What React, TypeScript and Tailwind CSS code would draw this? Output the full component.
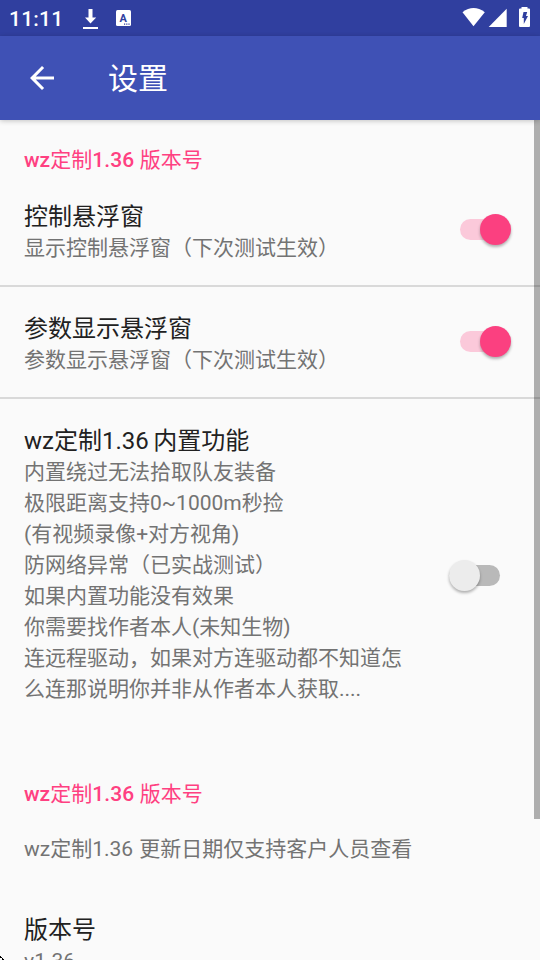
import React from "react";

interface PreferenceItem {
  title: string;
  lines: string[];
  checked: boolean;
}

const PREFERENCES: PreferenceItem[] = [
  {
    title: "控制悬浮窗",
    lines: ["显示控制悬浮窗（下次测试生效）"],
    checked: true,
  },
  {
    title: "参数显示悬浮窗",
    lines: ["参数显示悬浮窗（下次测试生效）"],
    checked: true,
  },
  {
    title: "wz定制1.36 内置功能",
    lines: [
      "内置绕过无法拾取队友装备",
      "极限距离支持0~1000m秒捡",
      "(有视频录像+对方视角)",
      "防网络异常（已实战测试）",
      "如果内置功能没有效果",
      "你需要找作者本人(未知生物)",
      "连远程驱动，如果对方连驱动都不知道怎",
      "么连那说明你并非从作者本人获取....",
    ],
    checked: false,
  },
];

export default function App() {
  return (
    <div className="relative flex h-[960px] w-[540px] flex-col overflow-hidden bg-[#fafafa] font-[Roboto,'Noto_Sans_CJK_SC',sans-serif] text-[#212121]">
      <StatusBar />
      <Toolbar title="设置" />

      <main className="flex-1 overflow-hidden">
        <CategoryTitle />
        {PREFERENCES.map((item, i) => (
          <SwitchPreference
            key={item.title}
            item={item}
            divider={i < PREFERENCES.length - 1}
          />
        ))}

        <div className="mt-0.5">
          <CategoryTitle />
        </div>
        <p className="mt-[25px] h-[31px] px-6 text-[21px] leading-[31px] text-[#737373] [word-spacing:0.8px]">
          wz定制1.36 更新日期仅支持客户人员查看
        </p>
        <div className="mt-12 px-6">
          <h2 className="h-[33px] text-2xl leading-[35px]">版本号</h2>
          <p className="text-[21px] leading-[31px] text-[#737373]">v1.36</p>
        </div>
      </main>

      {/* Scrollbar */}
      <div className="absolute right-0 top-[120px] h-[699px] w-1.5 bg-black/30" />

      {/* Pointer edge */}
      <svg
        className="absolute bottom-0 left-0"
        width="5"
        height="4"
        viewBox="0 0 5 4"
        shapeRendering="crispEdges"
      >
        <path d="M0 0h1v2H0zM1 1h1v1H1zM2 2h1v1H2zM2 3h2v1H2z" fill="#000" />
      </svg>
    </div>
  );
}

// ============================================================
// Sub-components
// ============================================================

function StatusBar() {
  return (
    <div className="flex h-9 shrink-0 items-center bg-[#303f9f] text-white">
      <span className="ml-[9px] w-[72px] pt-px text-[21px] font-medium leading-9 tracking-[0.2px]">
        11:11
      </span>
      <svg className="ml-0.5" width="16" height="36" viewBox="0 0 16 36" fill="#fff">
        <path d="M5.500 9h4v8.500h3.700L7.500 23.500 2 17.500h3.500zM0 27h15v2H0z" />
      </svg>
      <svg className="ml-[17px]" width="15" height="36" viewBox="0 0 15 36">
        <rect y="10" width="15" height="16" rx="1.500" fill="#fff" />
        <text
          x="7.300"
          y="22"
          textAnchor="middle"
          className="text-[11px] font-bold"
          fill="#303f9f"
        >
          A
        </text>
        <path d="M8 23.500h1.200v1.200H8zM10.200 23.500h1.200v1.200h-1.200zM12.400 23.500h1.200v1.200h-1.200z" fill="#303f9f" />
      </svg>
      <svg className="ml-auto mr-[9px]" width="69" height="36" viewBox="0 0 69 36" fill="#fff">
        <path d="M0.500 12.200Q11.500 4 22.800 12.200L11.500 26.300z" />
        <path d="M44.700 8.700V27H26.700z" />
        <path d="M59.500 7h6v1.500H67q1 0 1 1V26q0 1-1 1h-9q-1 0-1-1V9.500q0-1 1-1h1.500z" />
        <path d="M61.500 12h3.700l-1.200 4h2l-4.200 8v-5.900h-1.600z" fill="#303f9f" />
      </svg>
    </div>
  );
}

function Toolbar({ title }: { title: string }) {
  return (
    <header className="z-10 flex h-[84px] shrink-0 items-center bg-[#3f51b5] text-white shadow-[0_1px_5px_rgba(0,0,0,0.22)]">
      <button className="ml-6 flex h-9 w-9 items-center justify-center" aria-label="返回">
        <svg width="36" height="36" viewBox="0 0 24 24" fill="#fff">
          <path d="M20 11H7.830l5.590-5.590L12 4l-8 8 8 8 1.410-1.410L7.830 13H20v-2z" />
        </svg>
      </button>
      <h1 className="ml-12 pt-0.5 text-[30px] leading-[44px]">{title}</h1>
    </header>
  );
}

function CategoryTitle() {
  return (
    <h3 className="h-[55px] px-6 pt-[25px] text-[21px] font-medium leading-[31px] text-[#ff4081]">
      wz<span className="font-normal">定制</span>
      <span className="tracking-[0.15px]">1.36 </span>
      <span className="font-normal">版本号</span>
    </h3>
  );
}

function SwitchPreference({
  item,
  divider,
}: {
  item: PreferenceItem;
  divider: boolean;
}) {
  return (
    <div
      className={`flex items-center justify-between px-6 ${
        divider ? "h-[112px] border-b-2 border-[#d9d9d9]" : "h-[353px]"
      }`}
    >
      <div className="self-start pt-[25px]">
        <h2 className="h-[33px] text-2xl leading-[35px] [word-spacing:-1.5px]">{item.title}</h2>
        {item.lines.map((line) => (
          <p
            key={line}
            className="whitespace-nowrap text-[21px] leading-[31px] text-[#737373]"
          >
            {line}
          </p>
        ))}
      </div>
      <Switch checked={item.checked} />
    </div>
  );
}

function Switch({ checked }: { checked: boolean }) {
  return (
    <div className={`flex w-[72px] items-center ${checked ? "justify-end pb-px" : ""}`}>
      <div
        className={`flex h-[21px] items-center rounded-full ${
          checked
            ? "mr-[5px] w-[51px] justify-end bg-[#fbc9da]"
            : "ml-[5px] w-[51px] bg-[#b9b9b9]"
        }`}
      >
        <div
          className={`h-[31px] w-[31px] shrink-0 rounded-full shadow-[0_2px_3px_rgba(0,0,0,0.3)] ${
            checked ? "bg-[#fb4080]" : "bg-[#ececec]"
          }`}
        />
      </div>
    </div>
  );
}
